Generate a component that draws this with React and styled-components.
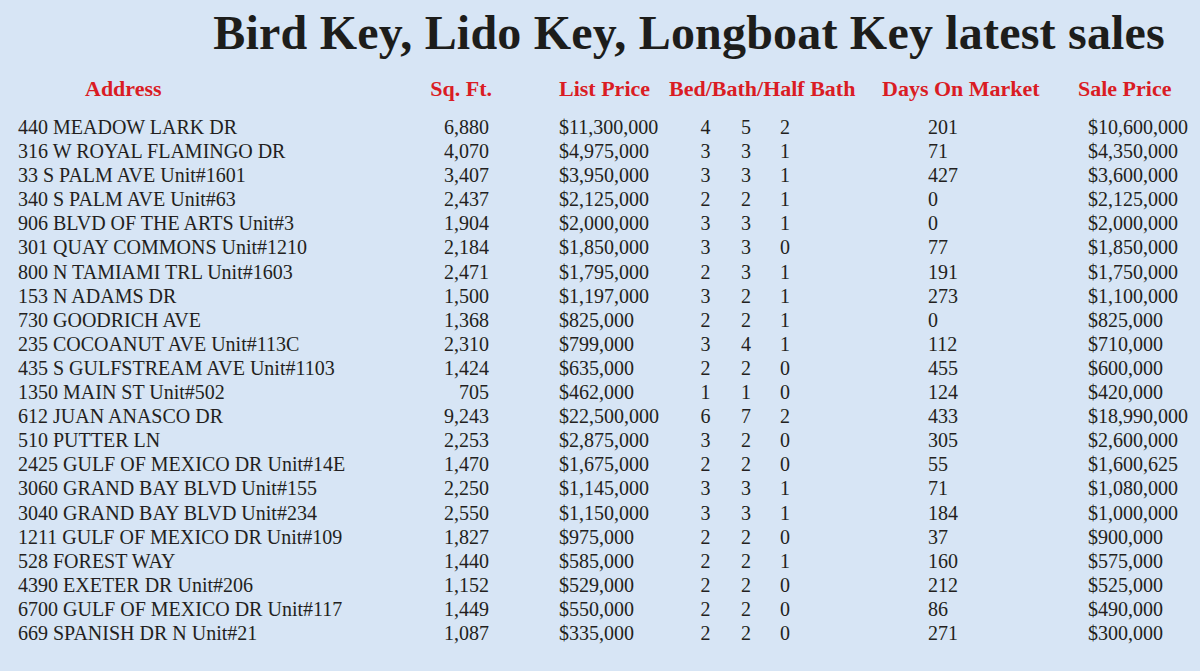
import styled, { createGlobalStyle } from "styled-components";

const GlobalStyle = createGlobalStyle`
    html, body {
        margin: 0;
        padding: 0;
        background: #d7e5f5;
    }
    body {
        font-family: "Liberation Serif", "Times New Roman", serif;
        color: #231f20;
    }
`;

const sales = [
    ["440 MEADOW LARK DR", "6,880", "$11,300,000", 4, 5, 2, 201, "$10,600,000"],
    ["316 W ROYAL FLAMINGO DR", "4,070", "$4,975,000", 3, 3, 1, 71, "$4,350,000"],
    ["33 S PALM AVE Unit#1601", "3,407", "$3,950,000", 3, 3, 1, 427, "$3,600,000"],
    ["340 S PALM AVE Unit#63", "2,437", "$2,125,000", 2, 2, 1, 0, "$2,125,000"],
    ["906 BLVD OF THE ARTS Unit#3", "1,904", "$2,000,000", 3, 3, 1, 0, "$2,000,000"],
    ["301 QUAY COMMONS Unit#1210", "2,184", "$1,850,000", 3, 3, 0, 77, "$1,850,000"],
    ["800 N TAMIAMI TRL Unit#1603", "2,471", "$1,795,000", 2, 3, 1, 191, "$1,750,000"],
    ["153 N ADAMS DR", "1,500", "$1,197,000", 3, 2, 1, 273, "$1,100,000"],
    ["730 GOODRICH AVE", "1,368", "$825,000", 2, 2, 1, 0, "$825,000"],
    ["235 COCOANUT AVE Unit#113C", "2,310", "$799,000", 3, 4, 1, 112, "$710,000"],
    ["435 S GULFSTREAM AVE Unit#1103", "1,424", "$635,000", 2, 2, 0, 455, "$600,000"],
    ["1350 MAIN ST Unit#502", "705", "$462,000", 1, 1, 0, 124, "$420,000"],
    ["612 JUAN ANASCO DR", "9,243", "$22,500,000", 6, 7, 2, 433, "$18,990,000"],
    ["510 PUTTER LN", "2,253", "$2,875,000", 3, 2, 0, 305, "$2,600,000"],
    ["2425 GULF OF MEXICO DR Unit#14E", "1,470", "$1,675,000", 2, 2, 0, 55, "$1,600,625"],
    ["3060 GRAND BAY BLVD Unit#155", "2,250", "$1,145,000", 3, 3, 1, 71, "$1,080,000"],
    ["3040 GRAND BAY BLVD Unit#234", "2,550", "$1,150,000", 3, 3, 1, 184, "$1,000,000"],
    ["1211 GULF OF MEXICO DR Unit#109", "1,827", "$975,000", 2, 2, 0, 37, "$900,000"],
    ["528 FOREST WAY", "1,440", "$585,000", 2, 2, 1, 160, "$575,000"],
    ["4390 EXETER DR Unit#206", "1,152", "$529,000", 2, 2, 0, 212, "$525,000"],
    ["6700 GULF OF MEXICO DR Unit#117", "1,449", "$550,000", 2, 2, 0, 86, "$490,000"],
    ["669 SPANISH DR N Unit#21", "1,087", "$335,000", 2, 2, 0, 271, "$300,000"],
];

const Page = styled.div`
    width: 1200px;
    height: 671px;
    padding: 5px 0 0 18px;
    box-sizing: border-box;
    overflow: hidden;
`;

const Title = styled.h1`
    margin: 0;
    padding-right: 35px;
    text-align: right;
    font-size: 48px;
    line-height: 56px;
    font-weight: bold;
    letter-spacing: 0.2px;
    color: #1d1d1b;
    white-space: nowrap;
`;

// address | sq ft | list price | bed/bath/half | days | sale price
const columns = "382px 92px 177px 201px 207px 1fr";

const HeadRow = styled.div`
    display: grid;
    grid-template-columns: ${columns};
    margin-top: 16px;
    height: 24px;
`;

const Head = styled.div`
    font-size: 22px;
    line-height: 24px;
    font-weight: bold;
    color: #da1c24;
    white-space: nowrap;
    text-align: ${(p) => p.$align || "left"};
    padding-left: ${(p) => p.$pad || 0}px;
`;

const Body = styled.div`
    margin-top: 14px;
`;

const Row = styled.div`
    display: grid;
    grid-template-columns: ${columns};
    height: 24.1px;
    font-size: 20px;
    line-height: 24.1px;
`;

const Cell = styled.div`
    white-space: nowrap;
    text-align: ${(p) => p.$align || "left"};
    padding-left: ${(p) => p.$pad || 0}px;
    padding-right: ${(p) => p.$padRight || 0}px;
`;

const Rooms = styled.div`
    display: grid;
    grid-template-columns: 41px 40px 38px;
    padding-left: 16px;
`;

const Room = styled.span`
    text-align: center;
`;

export default function App() {
    return (
        <>
            <GlobalStyle />
            <Page>
                <Title>Bird Key, Lido Key, Longboat Key latest sales</Title>
                <HeadRow>
                    <Head $pad={67}>Address</Head>
                    <Head $align="right">Sq. Ft.</Head>
                    <Head $pad={67}>List Price</Head>
                    <Head>Bed/Bath/Half Bath</Head>
                    <Head $pad={12}>Days On Market</Head>
                    <Head $pad={1}>Sale Price</Head>
                </HeadRow>
                <Body>
                    {sales.map(([address, sqft, list, bed, bath, half, days, sale]) => (
                        <Row key={address}>
                            <Cell>{address}</Cell>
                            <Cell $align="right" $padRight={3}>{sqft}</Cell>
                            <Cell $pad={67}>{list}</Cell>
                            <Rooms>
                                <Room>{bed}</Room>
                                <Room>{bath}</Room>
                                <Room>{half}</Room>
                            </Rooms>
                            <Cell $pad={58}>{days}</Cell>
                            <Cell $pad={11}>{sale}</Cell>
                        </Row>
                    ))}
                </Body>
            </Page>
        </>
    );
}
